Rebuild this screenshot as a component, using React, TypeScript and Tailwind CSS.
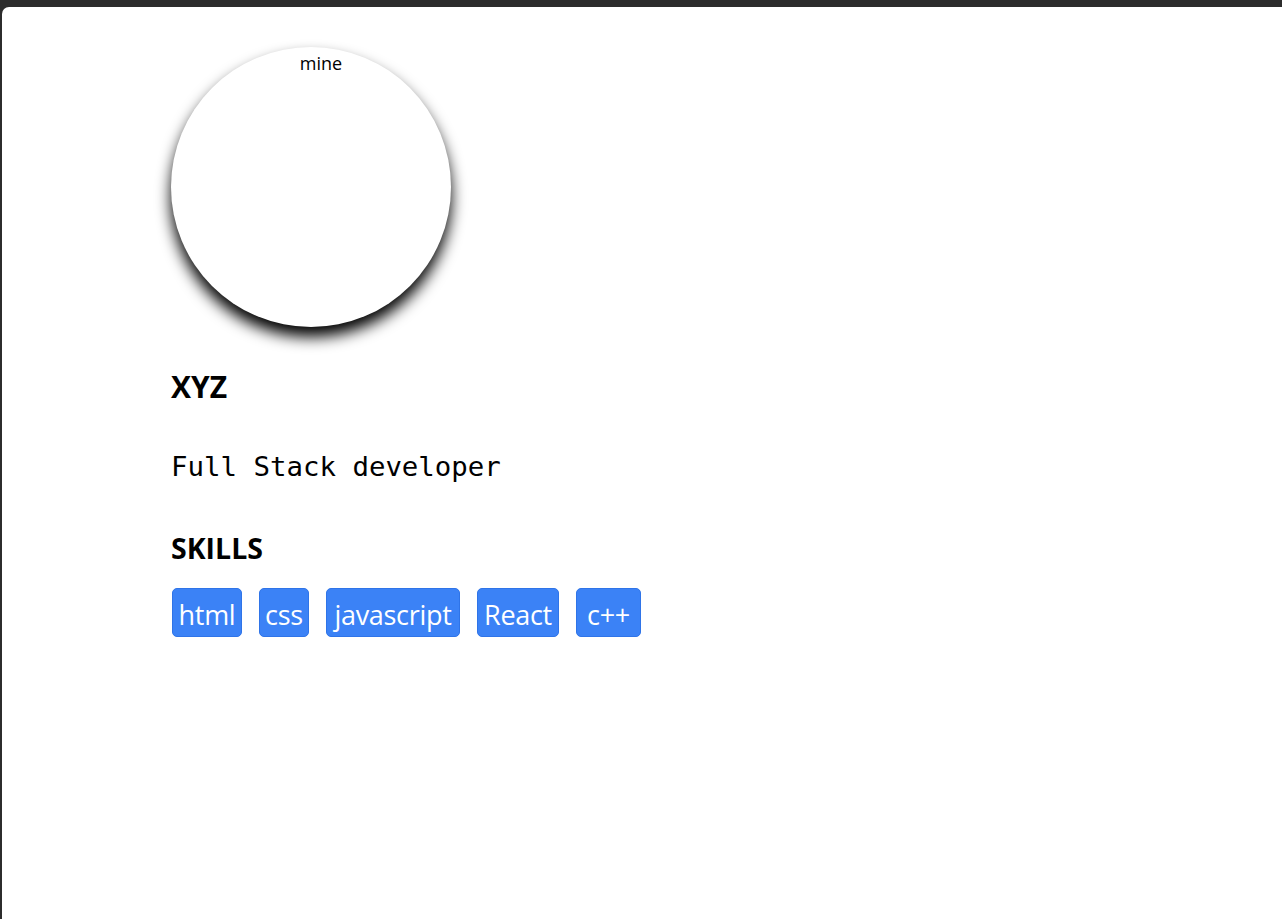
const skills = [
  { label: "html", width: "w-[70px]" },
  { label: "css", width: "w-[50px]" },
  { label: "javascript", width: "w-[134px]" },
  { label: "React", width: "w-[82px]" },
  { label: "c++", width: "w-[65px]" },
];

export default function App() {
  return (
    <div className="min-h-screen bg-[#2c2c2c] pt-[7px] pl-[2px]">
      <div className="min-h-[912px] rounded-tl-[7px] bg-white pl-[169px] pt-[40px] font-['Open_Sans',sans-serif] text-black">
        {/* Profile picture (broken image, alt text shows) */}
        <div className="h-[280px] w-[280px] rounded-full bg-white pl-[20px] pt-[4px] text-center text-[18px] leading-[25px] shadow-[0_10px_15px_#000]">
          mine
        </div>

        <h1 className="mt-[40px] text-[30px] font-bold leading-[40px]">XYZ</h1>

        <p className="mt-[44px] font-['DejaVu_Sans_Mono',monospace] text-[27.4px] leading-[32px]">
          Full Stack developer
        </p>

        <h2 className="mt-[45px] text-[28.5px] font-bold leading-[40px]">SKILLS</h2>

        <div className="mt-[20px] flex gap-[17px] pl-[1px]">
          {skills.map((s) => (
            <span
              key={s.label}
              className={`${s.width} h-[49px] rounded-[5px] border border-[#2f74e8] bg-[#3b82f6] pt-[6px] text-center text-[27px] leading-[40px] tracking-[-0.3px] text-white`}
            >
              {s.label}
            </span>
          ))}
        </div>
      </div>
    </div>
  );
}
